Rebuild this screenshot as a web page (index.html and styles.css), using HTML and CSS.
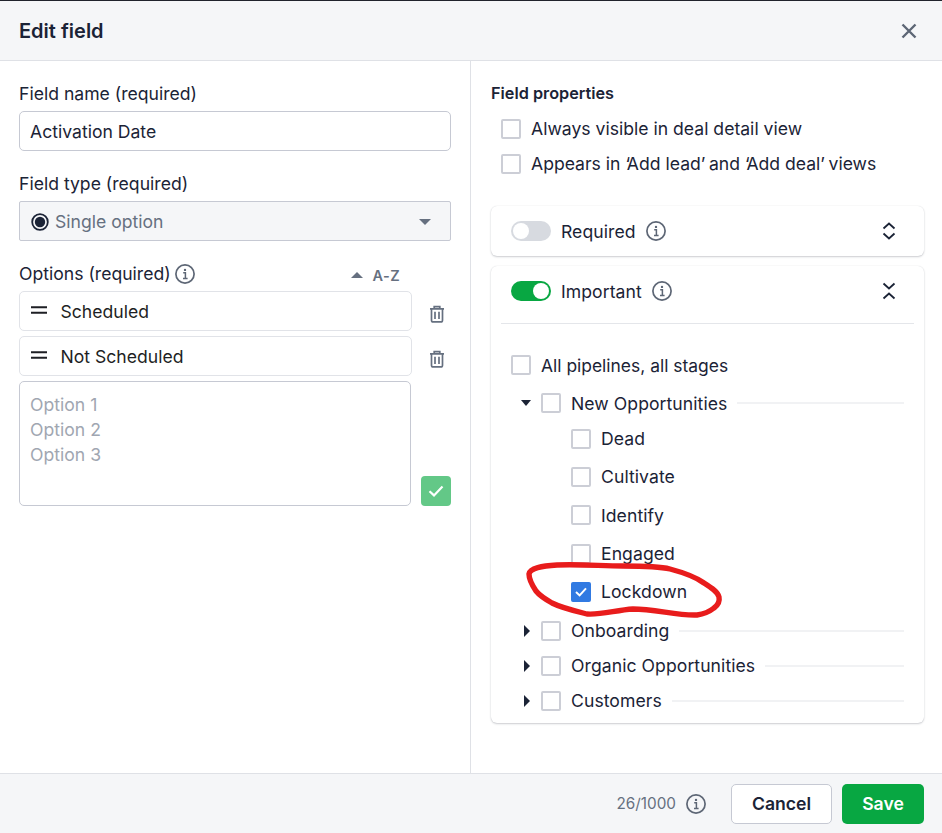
FILE: index.html
```html
<!DOCTYPE html>
<html lang="en">
<head>
<meta charset="utf-8">
<title>Edit field</title>
<link rel="stylesheet" href="styles.css">
</head>
<body>
<svg width="0" height="0" class="defs">
  <symbol id="info" viewBox="0 0 20 20"><circle cx="10" cy="10" r="9.1" fill="none" stroke="currentColor" stroke-width="1.7"/><circle cx="10" cy="5.9" r="1.2" fill="currentColor"/><path d="M8.2 8.8H10.4V14.4M8 14.6H12.6" fill="none" stroke="currentColor" stroke-width="1.5"/></symbol>
  <symbol id="trash" viewBox="0 0 16 18"><path d="M1 3.8H15M5.2 3.5V1.6H10.8V3.5M2.5 4V15.2C2.5 16.2 3.2 16.9 4.2 16.9H11.8C12.8 16.9 13.5 16.2 13.5 15.2V4M6 6.8V14M10 6.8V14" fill="none" stroke="currentColor" stroke-width="1.7"/></symbol>
  <symbol id="grip" viewBox="0 0 16 8"><path d="M0 1.2H16M0 6.8H16" fill="none" stroke="currentColor" stroke-width="2"/></symbol>
</svg>
<div class="modal">
  <header class="head">
    <h1>Edit field</h1>
    <svg class="close" viewBox="0 0 16 16"><path d="M1.5 1.5L14.5 14.5M14.5 1.5L1.5 14.5" fill="none" stroke="currentColor" stroke-width="2.4"/></svg>
  </header>
  <main class="body">
    <section class="left">
      <label class="lab">Field name (required)</label>
      <div class="field">Activation Date</div>
      <label class="lab lab-type">Field type (required)</label>
      <div class="field select">
        <svg class="radio" viewBox="0 0 18 18"><circle cx="9" cy="9" r="7.8" fill="none" stroke="#1b2336" stroke-width="1.8"/><circle cx="9" cy="9" r="5.2" fill="#1b2336"/></svg>
        <span class="sel-text">Single option</span>
        <span class="caret-down"></span>
      </div>
      <div class="opt-head">
        <span class="lab">Options (required)</span>
        <svg class="ic20 grey"><use href="#info"/></svg>
        <span class="az"><span class="caret-up"></span>A-Z</span>
      </div>
      <div class="opt-row">
        <div class="opt"><svg class="grip"><use href="#grip"/></svg>Scheduled</div>
        <svg class="trash"><use href="#trash"/></svg>
      </div>
      <div class="opt-row">
        <div class="opt"><svg class="grip"><use href="#grip"/></svg>Not Scheduled</div>
        <svg class="trash"><use href="#trash"/></svg>
      </div>
      <div class="new-row">
        <div class="area"><div>Option 1</div><div>Option 2</div><div>Option 3</div></div>
        <span class="ok"><svg viewBox="0 0 16 12"><path d="M1.5 6.2L6 10.4L14.5 1.6" fill="none" stroke="#fff" stroke-width="2.2"/></svg></span>
      </div>
    </section>
    <section class="right">
      <h2>Field properties</h2>
      <div class="prop"><span class="cb"></span>Always visible in deal detail view</div>
      <div class="prop"><span class="cb"></span><span>Appears in <span class="q-open">‘</span>Add lead<span class="q-close">’</span> and <span class="q-open">‘</span>Add deal<span class="q-close">’</span> views</span></div>
      <div class="card card-closed">
        <div class="card-row">
          <span class="toggle"></span>
          <span>Required</span>
          <svg class="ic20 grey"><use href="#info"/></svg>
          <svg class="chev" viewBox="0 0 14 18"><path d="M1.5 6.5L7 1.5L12.5 6.5M1.5 11.5L7 16.5L12.5 11.5" fill="none" stroke="currentColor" stroke-width="1.8"/></svg>
        </div>
      </div>
      <div class="card card-open">
        <div class="card-row row-open">
          <span class="toggle on"></span>
          <span>Important</span>
          <svg class="ic20 grey"><use href="#info"/></svg>
          <svg class="chev" viewBox="0 0 14 18"><path d="M1.5 1.5L7 6.5L12.5 1.5M1.5 16.5L7 11.5L12.5 16.5" fill="none" stroke="currentColor" stroke-width="1.8"/></svg>
        </div>
        <div class="tree">
          <div class="t-all"><span class="cb"></span>All pipelines, all stages</div>
          <div class="t-pipe t-first"><span class="tri tri-down"></span><span class="cb"></span><span>New Opportunities</span><i></i></div>
          <div class="t-stage s1"><span class="cb"></span>Dead</div>
          <div class="t-stage"><span class="cb"></span>Cultivate</div>
          <div class="t-stage"><span class="cb"></span>Identify</div>
          <div class="t-stage"><span class="cb"></span>Engaged</div>
          <div class="t-stage"><span class="cb checked"><svg viewBox="0 0 12 10"><path d="M1 5L4.6 8.4L11 1.4" fill="none" stroke="#fff" stroke-width="2"/></svg></span>Lockdown</div>
          <div class="t-pipe t-after"><span class="tri tri-right"></span><span class="cb"></span><span>Onboarding</span><i></i></div>
          <div class="t-pipe"><span class="tri tri-right"></span><span class="cb"></span><span>Organic Opportunities</span><i></i></div>
          <div class="t-pipe"><span class="tri tri-right"></span><span class="cb"></span><span>Customers</span><i></i></div>
        </div>
      </div>
    </section>
  </main>
  <footer class="foot">
    <span class="count">26/1000</span>
    <svg class="ic20 grey foot-info"><use href="#info"/></svg>
    <span class="btn cancel">Cancel</span>
    <span class="btn save">Save</span>
  </footer>
</div>
<svg class="scribble" viewBox="0 0 210 70"><path d="M37 10C60 9 82 11 103 11C122 11 138 11 150 14C165 18 176 22 184 28C192 33 198 37 199 42C200 47 198 50 194 53C189 57 184 59 177 60C158 61 135 54 113 54C96 55 82 60 67 59C55 56 42 53 32 48C25 44 20 41 16 36C12 30 9 25 9 19C10 13 22 11 37 10Z" fill="none" stroke="#e81c1c" stroke-width="5.4" stroke-linecap="round" stroke-linejoin="round"/></svg>
</body>
</html>
```
FILE: styles.css
```css
* { box-sizing: border-box; }
html, body { margin: 0; height: 100%; }
body {
  font-family: Inter, "Liberation Sans", sans-serif;
  font-size: 17.6px;
  line-height: 25px;
  color: #1b2336;
  background: #fff;
  overflow: hidden;
  position: relative;
}
.defs { position: absolute; }
.modal { display: flex; flex-direction: column; height: 833px; border-top: 1px solid #21232c; }
.head {
  height: 60px;
  flex: none;
  background: #f5f6f8;
  border-bottom: 1px solid #dfe1e6;
  display: flex;
  align-items: center;
  justify-content: space-between;
  padding: 0 25px 0 19px;
}
h1 { margin: 0; font-size: 20px; font-weight: 600; line-height: 60px; }
.close { width: 16px; height: 16px; color: #5d6675; }
.body { flex: 1; display: flex; min-height: 0; }
.left { width: 471px; flex: none; border-right: 1px solid #dfe1e6; padding: 20px 19px 0; }
.right { flex: 1; padding: 20px 18px 0 20px; }
.lab { display: block; }
.field {
  height: 40px;
  margin-top: 5px;
  border: 1px solid #c6c9d3;
  border-radius: 5px;
  padding: 0 10px;
  line-height: 40px;
}
.lab-type { margin-top: 20px; }
.select {
  margin-top: 5px;
  background: #f5f6f8;
  border-radius: 2px;
  display: flex;
  align-items: center;
  padding: 1px 19px 0 11px;
  color: #667080;
}
.radio { width: 18px; height: 18px; margin-right: 6px; }
.sel-text { flex: 1; }
.caret-down { width: 0; height: 0; border: 6px solid transparent; border-top: 6px solid #667080; border-bottom: 0; }
.opt-head { display: flex; align-items: center; margin-top: 20px; height: 25px; }
.ic20 { width: 20px; height: 20px; flex: none; }
.grey { color: #5d6675; }
.opt-head .ic20 { margin-left: 4px; }
.az { margin-left: auto; margin-right: 51px; padding-top: 3px; font-size: 14.5px; letter-spacing: .4px; font-weight: 600; color: #667080; display: flex; align-items: center; }
.caret-up { width: 0; height: 0; border: 6px solid transparent; border-bottom: 6px solid #667080; border-top: 0; margin-right: 10px; }
.opt-row { display: flex; align-items: center; margin-top: 5px; }
.opt {
  width: 393px;
  height: 40px;
  border: 1px solid #e1e3e8;
  border-radius: 5px;
  display: flex;
  align-items: center;
  padding-left: 11px;
  color: #1e1f24;
  margin-right: 17px;
}
.grip { width: 16px; height: 8px; margin-right: 13.5px; color: #1e1f24; position: relative; top: -1px; }
.trash { width: 16px; height: 18px; color: #667080; position: relative; top: 3px; }
.new-row { display: flex; align-items: flex-end; margin-top: 5px; }
.area {
  width: 392px;
  height: 125px;
  border: 1px solid #c6c9d3;
  border-radius: 5px;
  padding: 10px;
  color: #a0a6b1;
}
.ok { width: 30px; height: 30px; margin-left: 10px; background: #63c887; border-radius: 4px; display: flex; align-items: center; justify-content: center; }
.ok svg { width: 16px; height: 12px; }
h2 { margin: 0 0 12.7px; font-size: 16.25px; font-weight: 600; line-height: 25px; }
.cb {
  width: 20px;
  height: 20px;
  flex: none;
  border: 2px solid #ccced6;
  border-radius: 2px;
  background: #fff;
  margin-right: 10px;
  display: inline-flex;
  align-items: center;
  justify-content: center;
}
.cb.checked { background: #317ae2; border-color: #317ae2; }
.cb svg { width: 12px; height: 10px; }
.prop { display: flex; align-items: center; height: 20px; margin-left: 10px; margin-bottom: 15px; }
.q-open { letter-spacing: -3.2px; }
.q-close { letter-spacing: -1.4px; }
.card {
  width: 433px;
  border-radius: 6px;
  background: #fff;
  box-shadow: 0 1px 2px rgba(30, 35, 55, .22), 0 0 1px rgba(30, 35, 55, .14);
  letter-spacing: .06px;
}
.card-closed { height: 50px; margin-top: 32.4px; }
.card-open { height: 457px; margin-top: 10px; padding: 0 10px; }
.card-row { display: flex; align-items: center; height: 50px; padding-left: 20px; padding-right: 28px; }
.card-row .ic20 { margin-left: 10px; }
.card-open .card-row { padding-left: 10px; padding-right: 18px; height: 58px; border-bottom: 1px solid #e4e6ea; padding-bottom: 7px; }
.toggle { width: 40px; height: 20px; border-radius: 10px; background: #d7dae0; margin-right: 10px; position: relative; flex: none; }
.toggle::after { content: ""; position: absolute; top: 2px; left: 2px; width: 16px; height: 16px; border-radius: 50%; background: #fff; }
.toggle.on { background: #08a742; }
.toggle.on::after { left: 22px; }
.chev { width: 14px; height: 18px; margin-left: auto; color: #1b2336; }
.tree { padding: 31px 10px 0; }
.t-all { display: flex; align-items: center; height: 20px; letter-spacing: 0; font-size: 17.45px; }
.t-pipe { display: flex; align-items: center; height: 20px; padding-left: 30px; position: relative; margin-top: 15px; }
.t-first { margin-top: 18px; }
.t-after { margin-top: 18.8px; }
.t-pipe i { flex: 1; height: 2px; background: #f1f2f4; margin-left: 10px; }
.t-stage { display: flex; align-items: center; height: 20px; padding-left: 60px; margin-top: 18.34px; }
.t-stage.s1 { margin-top: 15.55px; }
.tri { position: absolute; width: 0; height: 0; border-style: solid; border-color: transparent; }
.tri-down { left: 10px; top: 7px; border-width: 6px 5.5px 0; border-top-color: #1b2336; }
.tri-right { left: 13px; top: 4px; border-width: 6px 0 6px 6px; border-left-color: #1b2336; }
.foot {
  height: 60px;
  flex: none;
  background: #f5f6f8;
  border-top: 1px solid #dfe1e6;
  display: flex;
  align-items: center;
  justify-content: flex-end;
  padding-right: 18px;
}
.count { font-size: 15.3px; color: #667080; }
.foot-info { margin: 0 25px 0 10px; }
.btn { height: 40px; border-radius: 5px; display: flex; align-items: center; justify-content: center; font-weight: 600; }
.cancel { width: 101px; background: #fff; border: 1px solid #c6c9d3; margin-right: 10px; }
.save { width: 82px; background: #08a742; color: #fff; }
.scribble { position: absolute; left: 520px; top: 555px; width: 210px; height: 70px; }
```
